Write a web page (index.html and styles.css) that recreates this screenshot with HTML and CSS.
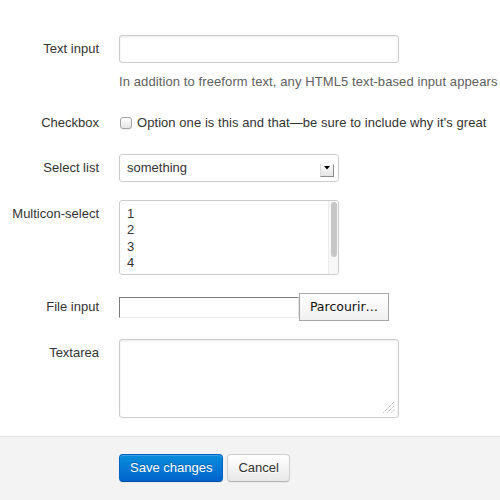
FILE: index.html
```html
<!DOCTYPE html>
<html>
<head>
<meta charset="utf-8">
<link rel="stylesheet" href="styles.css">
</head>
<body>
<form class="form">
  <div class="group">
    <label class="label" for="t1">Text input</label>
    <div class="controls">
      <input id="t1" class="input" type="text">
      <p class="help">In addition to freeform text, any HTML5 text-based input appears</p>
    </div>
  </div>
  <div class="group">
    <div class="label">Checkbox</div>
    <div class="controls">
      <label class="check"><input type="checkbox" class="check-box">Option one is this and that—be sure to include why it's great</label>
    </div>
  </div>
  <div class="group">
    <div class="label">Select list</div>
    <div class="controls">
      <div class="select">
        <span class="select-value">something</span>
        <span class="select-arrow"><svg width="6" height="4" viewBox="0 0 6 4"><polygon points="0,0 6,0 3,3.5" fill="#000"/></svg></span>
      </div>
    </div>
  </div>
  <div class="group">
    <div class="label">Multicon-select</div>
    <div class="controls">
      <div class="multi">
        <div class="multi-opts">
          <div>1</div><div>2</div><div>3</div><div>4</div>
        </div>
        <div class="scroll"><div class="thumb"></div></div>
      </div>
    </div>
  </div>
  <div class="group">
    <div class="label">File input</div>
    <div class="controls">
      <div class="file">
        <span class="file-field"></span>
        <span class="file-btn">Parcourir…</span>
      </div>
    </div>
  </div>
  <div class="group">
    <div class="label">Textarea</div>
    <div class="controls">
      <div class="ta-wrap">
        <textarea class="textarea"></textarea>
        <svg class="grip" width="12" height="12" viewBox="0 0 12 12">
          <line x1="0.5" y1="11.5" x2="11.5" y2="0.5" stroke="#9a9a9a" stroke-width="1" stroke-dasharray="1 1"/>
          <line x1="4.5" y1="11.5" x2="11.5" y2="4.5" stroke="#9a9a9a" stroke-width="1" stroke-dasharray="1 1"/>
          <line x1="8.5" y1="11.5" x2="11.5" y2="8.5" stroke="#9a9a9a" stroke-width="1" stroke-dasharray="1 1"/>
        </svg>
      </div>
    </div>
  </div>
  <div class="actions">
    <button type="button" class="btn btn-primary">Save changes</button>
    <button type="button" class="btn btn-default">Cancel</button>
  </div>
</form>
</body>
</html>
```
FILE: styles.css
```css
html, body {
  margin: 0;
  padding: 0;
  overflow: hidden;
  background: #fff;
}
body {
  font-family: "Liberation Sans", Arial, sans-serif;
  font-size: 13px;
  line-height: 18px;
  color: #333;
}
.form {
  margin: 0;
  padding-top: 35px;
}
.group {
  display: grid;
  grid-template-columns: 99px 1fr;
  column-gap: 20px;
  margin-bottom: 18px;
}
.label {
  padding-top: 5px;
  text-align: right;
  white-space: nowrap;
  color: #333;
}
.controls {
  min-width: 0;
}
.input {
  display: block;
  box-sizing: border-box;
  width: 280px;
  height: 28px;
  padding: 4px;
  margin: 0 0 10px;
  border: 1px solid #ccc;
  border-radius: 3px;
  box-shadow: inset 0 1px 3px rgba(0,0,0,0.08);
  font: inherit;
  background: #fff;
}
.help {
  margin: 0;
  color: #606060;
  white-space: nowrap;
  letter-spacing: 0.1px;
}
.check {
  display: flex;
  align-items: center;
  padding: 5px 0 4px;
  white-space: nowrap;
  letter-spacing: 0.06px;
}
.check-box {
  appearance: none;
  -webkit-appearance: none;
  box-sizing: border-box;
  width: 12px;
  height: 12px;
  margin: 0 5px 0 1px;
  border: 1px solid #a3a3a3;
  border-radius: 3px;
  background: linear-gradient(#ffffff, #e6e6e6);
  box-shadow: 0 1px 0 rgba(0,0,0,0.05);
}
.select {
  box-sizing: border-box;
  width: 220px;
  height: 28px;
  border: 1px solid #ccc;
  border-radius: 3px;
  display: flex;
  align-items: center;
  padding: 0 4px 0 7px;
  background: #fff;
}
.select-value {
  flex: 1;
}
.select-arrow {
  align-self: flex-end;
  margin-bottom: 4px;
  box-sizing: border-box;
  width: 14px;
  height: 13px;
  display: flex;
  justify-content: center;
  align-items: flex-start;
  padding-top: 1px;
  background: linear-gradient(#fbfbfb, #e4e4e4);
  border-top: 1px solid #fff;
  border-left: 1px solid #dcdcdc;
  border-right: 1px solid #8c8c8c;
  border-bottom: 1px solid #8c8c8c;
}
.multi {
  box-sizing: border-box;
  width: 220px;
  height: 75px;
  border: 1px solid #ccc;
  border-radius: 3px;
  display: flex;
  overflow: hidden;
  background: #fff;
}
.multi-opts {
  flex: 1;
  padding: 5px 7px;
  line-height: 16.4px;
}
.scroll {
  box-sizing: border-box;
  width: 10px;
  background: #f7f7f7;
  border-left: 1px solid #ececec;
  padding: 1px 1px 0 2px;
}
.thumb {
  width: 6px;
  height: 55px;
  border-radius: 3px;
  background: #c7c7c7;
}
.file {
  display: flex;
  align-items: center;
}
.file-field {
  box-sizing: border-box;
  width: 180px;
  height: 21px;
  border: 1px solid;
  border-color: #7b7b7b #e4e4e4 #ececec #7b7b7b;
  background: #fff;
}
.file-btn {
  box-sizing: border-box;
  width: 90px;
  height: 28px;
  border: 1px solid #a6a6a6;
  background: linear-gradient(#ffffff, #f0f0f0);
  font-family: "DejaVu Sans", sans-serif;
  font-size: 12.5px;
  color: #111;
  display: flex;
  align-items: center;
  justify-content: center;
}
.ta-wrap {
  position: relative;
  width: 280px;
  height: 79px;
}
.textarea {
  display: block;
  box-sizing: border-box;
  width: 280px;
  height: 79px;
  margin: 0;
  padding: 4px;
  border: 1px solid #ccc;
  border-radius: 3px;
  box-shadow: inset 0 1px 3px rgba(0,0,0,0.08);
  resize: none;
  font: inherit;
  background: #fff;
}
.grip {
  position: absolute;
  right: 4px;
  bottom: 5px;
}
.actions {
  display: flex;
  gap: 4px;
  border-top: 1px solid #e2e2e2;
  background: #f3f3f3;
  padding: 17px 0 18px 119px;
}
.btn {
  box-sizing: border-box;
  height: 28px;
  padding: 4px 10px;
  margin: 0;
  font-family: "Liberation Sans", Arial, sans-serif;
  font-size: 13px;
  line-height: 18px;
  border-radius: 4px;
  border: 1px solid;
  cursor: pointer;
}
.btn-primary {
  color: #fff;
  background: linear-gradient(#0a8ddb, #0064cd);
  border-color: #0065c2 #0065c2 #004c9e;
  text-shadow: 0 -1px 0 rgba(0,0,0,0.25);
  box-shadow: inset 0 1px 0 rgba(255,255,255,0.2), 0 1px 2px rgba(0,0,0,0.05);
}
.btn-default {
  color: #333;
  background: linear-gradient(#ffffff, #e8e8e8);
  border-color: #cfcfcf #cfcfcf #b5b5b5;
  text-shadow: 0 1px 1px rgba(255,255,255,0.75);
  box-shadow: inset 0 1px 0 rgba(255,255,255,0.2), 0 1px 2px rgba(0,0,0,0.05);
}
```
